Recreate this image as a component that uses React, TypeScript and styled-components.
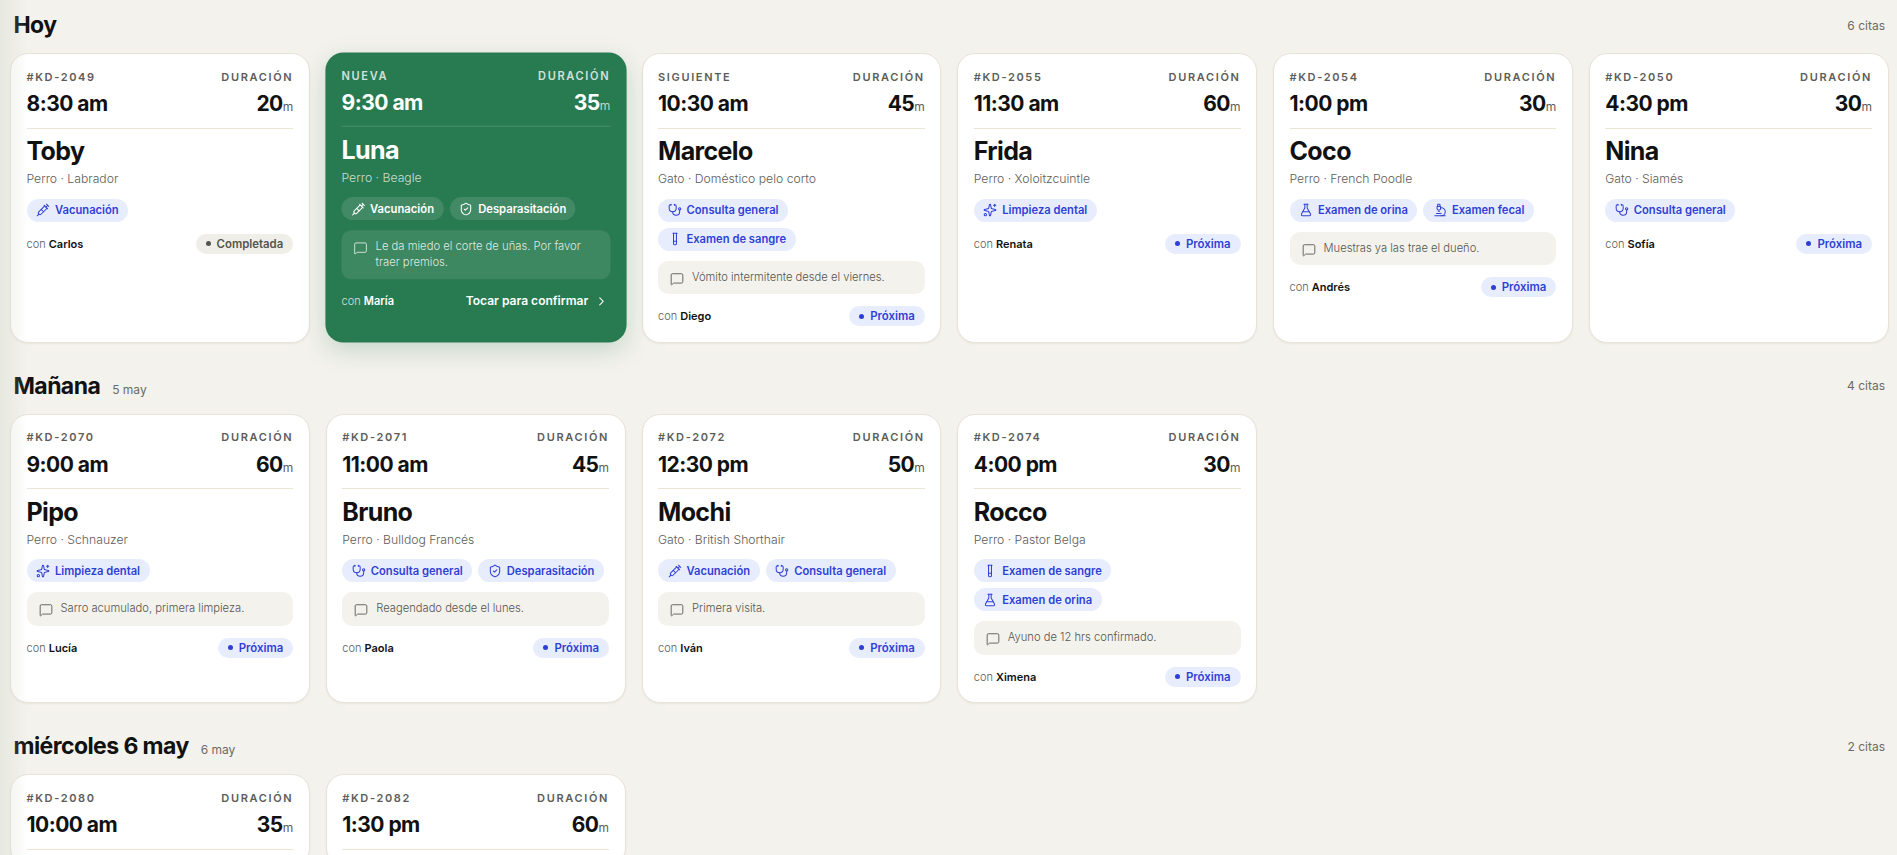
import React from 'react'
import styled, { createGlobalStyle } from 'styled-components'
import {
  ChevronRight,
  FlaskConical,
  MessageSquare,
  Microscope,
  ShieldCheck,
  Sparkles,
  Stethoscope,
  Syringe,
  TestTube,
} from 'lucide-react'

const GlobalStyle = createGlobalStyle`
  html, body {
    margin: 0;
    height: 100%;
    overflow: hidden;
    background: #f4f2ed;
    font-family: 'Inter', 'Liberation Sans', sans-serif;
    color: #111;
  }
  * { box-sizing: border-box; }
`

const services = {
  vacuna: { label: 'Vacunación', icon: Syringe },
  consulta: { label: 'Consulta general', icon: Stethoscope },
  sangre: { label: 'Examen de sangre', icon: TestTube },
  orina: { label: 'Examen de orina', icon: FlaskConical },
  fecal: { label: 'Examen fecal', icon: Microscope },
  limpieza: { label: 'Limpieza dental', icon: Sparkles },
  despara: { label: 'Desparasitación', icon: ShieldCheck },
}

type ServiceKey = keyof typeof services

type Appointment = {
  code: string
  time: string
  minutes: number
  pet?: string
  breed?: string
  tags?: ServiceKey[]
  note?: string
  vet?: string
  status?: 'done' | 'next' | 'confirm'
  featured?: boolean
}

type Day = {
  title: string
  date?: string
  count: string
  items: Appointment[]
}

const days: Day[] = [
  {
    title: 'Hoy',
    count: '6 citas',
    items: [
      { code: '#KD-2049', time: '8:30 am', minutes: 20, pet: 'Toby', breed: 'Perro · Labrador', tags: ['vacuna'], vet: 'Carlos', status: 'done' },
      { code: 'NUEVA', time: '9:30 am', minutes: 35, pet: 'Luna', breed: 'Perro · Beagle', tags: ['vacuna', 'despara'], note: 'Le da miedo el corte de uñas. Por favor traer premios.', vet: 'María', status: 'confirm', featured: true },
      { code: 'SIGUIENTE', time: '10:30 am', minutes: 45, pet: 'Marcelo', breed: 'Gato · Doméstico pelo corto', tags: ['consulta', 'sangre'], note: 'Vómito intermitente desde el viernes.', vet: 'Diego', status: 'next' },
      { code: '#KD-2055', time: '11:30 am', minutes: 60, pet: 'Frida', breed: 'Perro · Xoloitzcuintle', tags: ['limpieza'], vet: 'Renata', status: 'next' },
      { code: '#KD-2054', time: '1:00 pm', minutes: 30, pet: 'Coco', breed: 'Perro · French Poodle', tags: ['orina', 'fecal'], note: 'Muestras ya las trae el dueño.', vet: 'Andrés', status: 'next' },
      { code: '#KD-2050', time: '4:30 pm', minutes: 30, pet: 'Nina', breed: 'Gato · Siamés', tags: ['consulta'], vet: 'Sofía', status: 'next' },
    ],
  },
  {
    title: 'Mañana',
    date: '5 may',
    count: '4 citas',
    items: [
      { code: '#KD-2070', time: '9:00 am', minutes: 60, pet: 'Pipo', breed: 'Perro · Schnauzer', tags: ['limpieza'], note: 'Sarro acumulado, primera limpieza.', vet: 'Lucía', status: 'next' },
      { code: '#KD-2071', time: '11:00 am', minutes: 45, pet: 'Bruno', breed: 'Perro · Bulldog Francés', tags: ['consulta', 'despara'], note: 'Reagendado desde el lunes.', vet: 'Paola', status: 'next' },
      { code: '#KD-2072', time: '12:30 pm', minutes: 50, pet: 'Mochi', breed: 'Gato · British Shorthair', tags: ['vacuna', 'consulta'], note: 'Primera visita.', vet: 'Iván', status: 'next' },
      { code: '#KD-2074', time: '4:00 pm', minutes: 30, pet: 'Rocco', breed: 'Perro · Pastor Belga', tags: ['sangre', 'orina'], note: 'Ayuno de 12 hrs confirmado.', vet: 'Ximena', status: 'next' },
    ],
  },
  {
    title: 'miércoles 6 may',
    date: '6 may',
    count: '2 citas',
    items: [
      { code: '#KD-2080', time: '10:00 am', minutes: 35 },
      { code: '#KD-2082', time: '1:30 pm', minutes: 60 },
    ],
  },
]

const Page = styled.main`
  position: relative;
  height: 100vh;
  overflow: hidden;
  padding: 11.3px 8.5px 0 10px;
  display: flex;
  flex-direction: column;
  gap: 29px;
`

const EdgeFade = styled.div`
  position: absolute;
  inset: 0 auto 0 0;
  width: 28px;
  pointer-events: none;
  background: linear-gradient(to right, rgba(205, 213, 200, 0.35), rgba(205, 213, 200, 0));
`

const DayHeader = styled.header`
  height: 28px;
  margin-bottom: 14px;
  padding: 0 3.5px 0 3.5px;
  display: flex;
  align-items: center;
  justify-content: space-between;
`

const DayTitle = styled.div`
  display: flex;
  align-items: baseline;
  gap: 12px;
`

const DayName = styled.h2`
  margin: 0;
  font-size: 23px;
  font-weight: 700;
  letter-spacing: -0.025em;
  color: #111;
`

const Muted = styled.span`
  font-size: 12px;
  color: #6b6b66;
`

const CardGrid = styled.div`
  display: grid;
  grid-template-columns: repeat(6, 1fr);
  gap: 16px;
`

const Card = styled.article<{ $featured?: boolean }>`
  padding: ${p => (p.$featured ? '16.5px 16px 16px' : '16.7px 15.5px 15.5px')};
  border-radius: 18px;
  background: ${p => (p.$featured ? '#287a50' : '#fff')};
  border: ${p => (p.$featured ? 'none' : '1px solid #e8e3d6')};
  box-shadow: ${p => (p.$featured ? '0 8px 24px rgba(40, 122, 80, 0.22)' : '0 1px 2px rgba(60, 50, 30, 0.06)')};
  transform: ${p => (p.$featured ? 'scale(1.004)' : 'none')};
  color: ${p => (p.$featured ? '#fff' : '#111')};
`

const CardTop = styled.div<{ $featured?: boolean }>`
  padding-bottom: 10.5px;
  border-bottom: 1px solid ${p => (p.$featured ? 'rgba(255, 255, 255, 0.16)' : '#ebe5d6')};
`

const LabelRow = styled.div<{ $featured?: boolean }>`
  display: flex;
  justify-content: space-between;
  font-size: 11px;
  line-height: 13px;
  font-weight: 600;
  letter-spacing: 0.15em;
  color: ${p => (p.$featured ? 'rgba(255, 255, 255, 0.8)' : '#5c5c58')};
  margin-bottom: 7.3px;
`

const TimeRow = styled.div`
  display: flex;
  justify-content: space-between;
  align-items: baseline;
  font-size: 21px;
  line-height: 26px;
  font-weight: 700;
  letter-spacing: -0.025em;
`

const Unit = styled.span<{ $featured?: boolean }>`
  font-size: 12px;
  line-height: 1;
  font-weight: 400;
  letter-spacing: 0;
  color: ${p => (p.$featured ? 'rgba(255, 255, 255, 0.7)' : '#5c5c58')};
`

const PetName = styled.h3`
  margin: 7.5px 0 0;
  font-size: 25px;
  line-height: 30px;
  font-weight: 700;
  letter-spacing: -0.025em;
`

const Breed = styled.div<{ $featured?: boolean }>`
  margin-top: 5px;
  font-size: 12.2px;
  line-height: 16px;
  font-weight: 300;
  color: ${p => (p.$featured ? 'rgba(255, 255, 255, 0.75)' : '#5c5c58')};
`

const Chips = styled.div`
  margin-top: 11.5px;
  display: flex;
  flex-wrap: wrap;
  gap: 6px;
`

const Chip = styled.span<{ $featured?: boolean }>`
  height: 23px;
  padding: 0 9.5px;
  display: inline-flex;
  align-items: center;
  gap: 5px;
  border-radius: 12px;
  font-size: 11.2px;
  font-weight: 600;
  background: ${p => (p.$featured ? 'rgba(255, 255, 255, 0.12)' : '#e8edfd')};
  color: ${p => (p.$featured ? '#fff' : '#2f3fd6')};
`

const Note = styled.div<{ $featured?: boolean }>`
  margin-top: 10px;
  padding: 8px 12px 8.5px;
  display: flex;
  gap: 8px;
  border-radius: 10px;
  font-size: 11.2px;
  line-height: 16px;
  font-weight: 300;
  background: ${p => (p.$featured ? 'rgba(255, 255, 255, 0.1)' : '#f4f2ed')};
  color: ${p => (p.$featured ? 'rgba(255, 255, 255, 0.85)' : '#55554f')};

  svg {
    flex: none;
    margin-top: 3px;
  }
`

const Footer = styled.footer`
  margin-top: 12px;
  height: 20px;
  display: flex;
  align-items: center;
  justify-content: space-between;
`

const Vet = styled.span<{ $featured?: boolean }>`
  font-size: 11px;
  font-weight: 300;
  color: ${p => (p.$featured ? 'rgba(255, 255, 255, 0.8)' : '#5c5c58')};

  b {
    font-weight: 600;
    color: ${p => (p.$featured ? '#fff' : '#111')};
  }
`

const Status = styled.span<{ $done?: boolean }>`
  height: 20px;
  padding: 0 10px;
  display: inline-flex;
  align-items: center;
  gap: 6px;
  border-radius: 10px;
  font-size: 11.4px;
  font-weight: 600;
  background: ${p => (p.$done ? '#f0eee9' : '#e8edfd')};
  color: ${p => (p.$done ? '#55554f' : '#2f3fd6')};

  &::before {
    content: '';
    width: 5px;
    height: 5px;
    border-radius: 50%;
    background: currentColor;
  }
`

const Confirm = styled.span`
  display: inline-flex;
  align-items: center;
  gap: 6px;
  padding-right: 2px;
  font-size: 12px;
  font-weight: 600;
  color: #fff;
`

const AppointmentCard: React.FC<{ item: Appointment }> = ({ item }) => {
  const { featured } = item
  return (
    <Card $featured={featured}>
      <CardTop $featured={featured}>
        <LabelRow $featured={featured}>
          <span>{item.code}</span>
          <span>DURACIÓN</span>
        </LabelRow>
        <TimeRow>
          <span>{item.time}</span>
          <span>
            {item.minutes}
            <Unit $featured={featured}>m</Unit>
          </span>
        </TimeRow>
      </CardTop>
      {item.pet && (
        <>
          <PetName>{item.pet}</PetName>
          <Breed $featured={featured}>{item.breed}</Breed>
          <Chips>
            {item.tags?.map(key => {
              const { label, icon: Icon } = services[key]
              return (
                <Chip key={key} $featured={featured}>
                  <Icon size={14} strokeWidth={1.75} />
                  {label}
                </Chip>
              )
            })}
          </Chips>
          {item.note && (
            <Note $featured={featured}>
              <MessageSquare size={14} strokeWidth={1.5} />
              <span>{item.note}</span>
            </Note>
          )}
          <Footer>
            <Vet $featured={featured}>
              con <b>{item.vet}</b>
            </Vet>
            {item.status === 'confirm' ? (
              <Confirm>
                Tocar para confirmar
                <ChevronRight size={14} strokeWidth={1.75} />
              </Confirm>
            ) : (
              <Status $done={item.status === 'done'}>{item.status === 'done' ? 'Completada' : 'Próxima'}</Status>
            )}
          </Footer>
        </>
      )}
    </Card>
  )
}

export default function App() {
  return (
    <>
      <GlobalStyle />
      <Page>
        {days.map(day => (
          <section key={day.title}>
            <DayHeader>
              <DayTitle>
                <DayName>{day.title}</DayName>
                {day.date && <Muted>{day.date}</Muted>}
              </DayTitle>
              <Muted>{day.count}</Muted>
            </DayHeader>
            <CardGrid>
              {day.items.map(item => (
                <AppointmentCard key={item.code} item={item} />
              ))}
            </CardGrid>
          </section>
        ))}
        <EdgeFade />
      </Page>
    </>
  )
}
